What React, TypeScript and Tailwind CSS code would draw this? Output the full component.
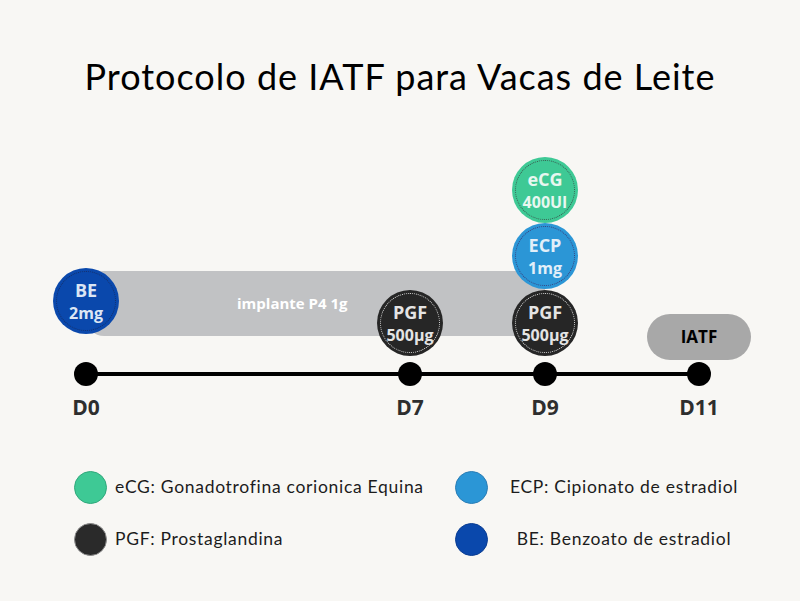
import React from 'react';

type Dose = {
  top: string;
  bottom: string;
  x: number;
  y: number;
  bg: string;
  ring: string;
  text: string;
};

// posições no canvas do diagrama (px, relativo ao topo do bloco)
const doses: Dose[] = [
  { top: 'BE', bottom: '2mg', x: 86, y: 151, bg: 'bg-[#0a48ac]', ring: 'border-[#16306a]', text: 'text-[#dce6f4]' },
  { top: 'PGF', bottom: '500µg', x: 410, y: 173, bg: 'bg-[#262626]', ring: 'border-[#d8d8d8]', text: 'text-[#e4e4e4]' },
  { top: 'eCG', bottom: '400UI', x: 545, y: 40, bg: 'bg-[#3ec995]', ring: 'border-[#3b5a50]', text: 'text-[#e8f7f0]' },
  { top: 'ECP', bottom: '1mg', x: 545, y: 106, bg: 'bg-[#2b96d6]', ring: 'border-[#3b3f7a]', text: 'text-[#e2eff9]' },
  { top: 'PGF', bottom: '500µg', x: 545, y: 173, bg: 'bg-[#262626]', ring: 'border-[#d8d8d8]', text: 'text-[#e4e4e4]' },
];

const days = [
  { label: 'D0', x: 86 },
  { label: 'D7', x: 410 },
  { label: 'D9', x: 545 },
  { label: 'D11', x: 699 },
];

function DoseCircle({ dose }: { dose: Dose }) {
  return (
    <div
      className={`absolute w-[66px] h-[66px] -ml-[33px] -mt-[33px] rounded-full ${dose.bg} flex flex-col items-center justify-center`}
      style={{ left: dose.x, top: dose.y }}
    >
      <div className={`absolute inset-[3px] rounded-full border border-dotted ${dose.ring}`} />
      <span className={`${dose.text} font-bold text-[18px] leading-[24px]`}>{dose.top}</span>
      <span className={`${dose.text} font-bold text-[16px] leading-[22px]`}>{dose.bottom}</span>
    </div>
  );
}

function LegendItem({ color, border, label, centered }: { color: string; border: string; label: string; centered?: boolean }) {
  return (
    <div className="flex items-center h-[33px]">
      <div className={`w-[33px] h-[33px] rounded-full border ${color} ${border} shrink-0`} />
      <span
        className={`text-[17.5px] tracking-[0.7px] text-[#1c1c1c] ${centered ? 'w-[272px] text-center' : 'ml-[8px]'}`}
      >
        {label}
      </span>
    </div>
  );
}

export default function App() {
  return (
    <div className="w-[800px] h-[601px] bg-[#f8f7f4] flex flex-col font-['Lato',sans-serif]">
      {/* título */}
      <div className="h-[150px] pt-[54px] text-center">
        <h1 className="text-[36px] leading-[44px] tracking-[1px] text-black">Protocolo de IATF para Vacas de Leite</h1>
      </div>

      {/* diagrama da linha do tempo */}
      <div className="relative h-[280px] font-['Open_Sans',sans-serif]">
        <div className="absolute left-[86px] top-[121px] w-[459px] h-[65px] rounded-[18px] bg-[#c1c2c4] flex items-center pl-[151px]">
          <span className="text-white font-bold text-[15px]">implante P4 1g</span>
        </div>

        <div className="absolute left-[86px] top-[222px] w-[613px] h-[4px] bg-black" />
        {days.map((d) => (
          <React.Fragment key={d.label}>
            <div
              className="absolute w-[24px] h-[24px] -ml-[12px] -mt-[12px] rounded-full bg-black"
              style={{ left: d.x, top: 224 }}
            />
            <div
              className="absolute w-[60px] -ml-[30px] text-center text-[21px] leading-[26px] font-bold text-[#2e2e2e]"
              style={{ left: d.x, top: 244 }}
            >
              {d.label}
            </div>
          </React.Fragment>
        ))}

        {doses.map((d, i) => (
          <DoseCircle key={i} dose={d} />
        ))}

        <div className="absolute left-[647px] top-[164px] w-[104px] h-[46px] rounded-full bg-[#a8a8a8] flex items-center justify-center">
          <span className="text-black font-bold text-[17px]">IATF</span>
        </div>
      </div>

      {/* legenda */}
      <div className="pt-[41px] pl-[74px] grid grid-cols-[381px_1fr] gap-y-[19px]">
        <LegendItem color="bg-[#3ec995]" border="border-[#30a87b]" label="eCG: Gonadotrofina corionica Equina" />
        <LegendItem color="bg-[#2b96d6]" border="border-[#2a7db5]" label="ECP: Cipionato de estradiol" centered />
        <LegendItem color="bg-[#2a2a2a]" border="border-[#8a8a8a]" label="PGF: Prostaglandina" />
        <LegendItem color="bg-[#0a48ac]" border="border-[#0a3d92]" label="BE: Benzoato de estradiol" centered />
      </div>
    </div>
  );
}
